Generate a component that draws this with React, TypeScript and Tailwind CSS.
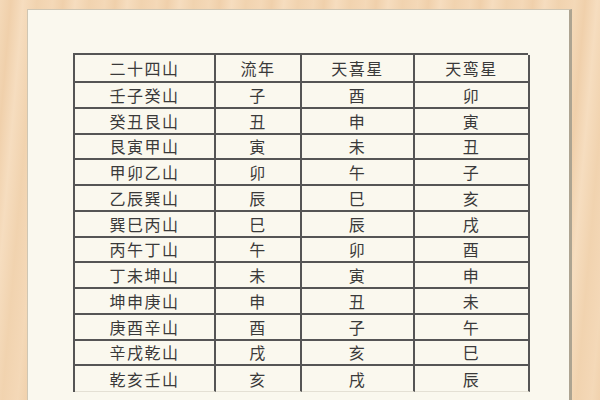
import React from "react";

const rows: string[][] = [
  ["壬子癸山", "子", "酉", "卯"],
  ["癸丑艮山", "丑", "申", "寅"],
  ["艮寅甲山", "寅", "未", "丑"],
  ["甲卯乙山", "卯", "午", "子"],
  ["乙辰巽山", "辰", "巳", "亥"],
  ["巽巳丙山", "巳", "辰", "戌"],
  ["丙午丁山", "午", "卯", "酉"],
  ["丁未坤山", "未", "寅", "申"],
  ["坤申庚山", "申", "丑", "未"],
  ["庚酉辛山", "酉", "子", "午"],
  ["辛戌乾山", "戌", "亥", "巳"],
  ["乾亥壬山", "亥", "戌", "辰"],
];

const header = ["二十四山", "流年", "天喜星", "天鸾星"];

export default function App() {
  return (
    <div
      className="w-[600px] h-[400px] overflow-hidden flex pt-[9px] pl-[27px] pr-[28px] bg-[#f3d6b4] bg-[repeating-linear-gradient(95deg,#f4d9b8_0px,#f0d0ab_11px,#f6ddbf_23px,#f1d3af_37px,#f4d8b7_52px)]"
      style={{ fontFamily: '"Noto Sans CJK SC", "Noto Sans", sans-serif' }}
    >
      <div className="flex-1 h-[400px] bg-[#faf8ee] border-l border-t border-[#cfc6b3] border-r-[3px] border-r-[#ada491] pl-[45px] pt-[43px]">
        <div className="w-[455px] border-l-2 border-t-2 border-[#555] grid grid-cols-[141px_86px_113px_115px] text-[16px] text-[#3a3a3a] leading-none">
          {header.map((h, i) => (
            <div
              key={"h" + i}
              className="h-[28px] flex items-center justify-center border-r-2 border-b-2 border-[#555] tracking-[1.5px]"
            >
              {h}
            </div>
          ))}
          {rows.map((r, ri) =>
            r.map((c, ci) => (
              <div
                key={ri + "-" + ci}
                className={
                  ri === rows.length - 1
                    ? "h-[25.75px] flex items-center justify-center border-r-2 border-[#555] border-b border-b-[#e4e0d4] tracking-[1.5px]"
                    : "h-[25.75px] flex items-center justify-center border-r-2 border-b-2 border-[#555] tracking-[1.5px]"
                }
              >
                {c}
              </div>
            ))
          )}
        </div>
      </div>
    </div>
  );
}
